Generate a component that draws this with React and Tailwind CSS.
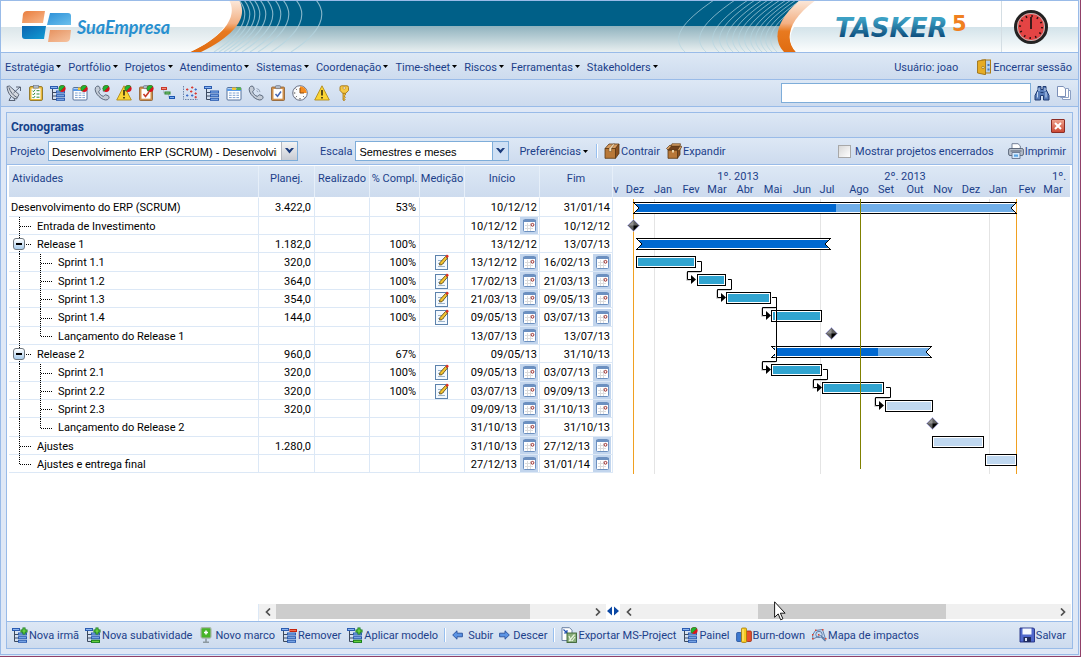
import React from "react";

const rows = [
  { id: "p", name: "Desenvolvimento do ERP (SCRUM)", level: 0, plan: "3.422,0", done: "53%", start: "10/12/12", end: "31/01/14" },
  { id: "inv", name: "Entrada de Investimento", level: 1, start: "10/12/12", pickStart: true, end: "10/12/12" },
  { id: "r1", name: "Release 1", level: 1, open: true, plan: "1.182,0", done: "100%", start: "13/12/12", end: "13/07/13" },
  { id: "s11", name: "Sprint 1.1", level: 2, plan: "320,0", done: "100%", note: true, start: "13/12/12", pickStart: true, end: "16/02/13", pickEnd: true },
  { id: "s12", name: "Sprint 1.2", level: 2, plan: "364,0", done: "100%", note: true, start: "17/02/13", pickStart: true, end: "21/03/13", pickEnd: true },
  { id: "s13", name: "Sprint 1.3", level: 2, plan: "354,0", done: "100%", note: true, start: "21/03/13", pickStart: true, end: "09/05/13", pickEnd: true },
  { id: "s14", name: "Sprint 1.4", level: 2, plan: "144,0", done: "100%", note: true, start: "09/05/13", pickStart: true, end: "03/07/13", pickEnd: true },
  { id: "l1", name: "Lançamento do Release 1", level: 2, last: true, start: "13/07/13", pickStart: true, end: "13/07/13" },
  { id: "r2", name: "Release 2", level: 1, open: true, plan: "960,0", done: "67%", start: "09/05/13", end: "31/10/13" },
  { id: "s21", name: "Sprint 2.1", level: 2, plan: "320,0", done: "100%", note: true, start: "09/05/13", pickStart: true, end: "03/07/13", pickEnd: true },
  { id: "s22", name: "Sprint 2.2", level: 2, plan: "320,0", done: "100%", note: true, start: "03/07/13", pickStart: true, end: "09/09/13", pickEnd: true },
  { id: "s23", name: "Sprint 2.3", level: 2, plan: "320,0", start: "09/09/13", pickStart: true, end: "31/10/13", pickEnd: true },
  { id: "l2", name: "Lançamento do Release 2", level: 2, last: true, start: "31/10/13", pickStart: true, end: "31/10/13" },
  { id: "aj", name: "Ajustes", level: 1, plan: "1.280,0", start: "31/10/13", pickStart: true, end: "27/12/13", pickEnd: true },
  { id: "fim", name: "Ajustes e entrega final", level: 1, last: true, start: "27/12/13", pickStart: true, end: "31/01/14", pickEnd: true },
];

function Icon({ children, className = "" }) {
  return (
    <svg viewBox="0 0 16 16" className={`h-4 w-4 shrink-0 ${className}`} aria-hidden="true">
      {children}
    </svg>
  );
}

const Orb = () => (
  <>
    <circle cx="12.2" cy="3.6" r="3.4" fill="#d8141c" />
    <path d="M8.8 3.6a3.4 3.4 0 0 1 6-2.2L10 6.200A3.400 3.400 0 0 1 8.800 3.600Z" fill="#22b431" stroke="#0c7a18" strokeWidth=".4" />
  </>
);

const TreeShape = () => (
  <>
    <path d="M2.500 3v11.500H6M2.500 7.500H6M2.500 11H6" fill="none" stroke="#3c4a60" />
    <rect x=".5" y="1.500" width="7" height="2" fill="#8ab4f0" stroke="#2b5cb0" />
    <rect x="6.500" y="6" width="8" height="2" fill="#8ab4f0" stroke="#2b5cb0" />
    <rect x="6.500" y="9.700" width="8" height="2" fill="#8ab4f0" stroke="#2b5cb0" />
    <rect x="6.500" y="13.300" width="8" height="2" fill="#8ab4f0" stroke="#2b5cb0" />
  </>
);

const WindowShape = () => (
  <>
    <rect x="1" y="2.500" width="14" height="12.500" rx="1" fill="#fff" stroke="#56729c" />
    <path d="M1 3.500h14v2.500H1z" fill="#5c9be6" />
    <path d="M6 2.500h4v2.500H6z" fill="#f3c534" />
    <path d="M10.500 2.500H15v2.500h-4.500z" fill="#57b847" />
    <path d="M3 8h10M3 10.300h10M3 12.600h10" stroke="#7da0d0" strokeDasharray="2.700 1" />
  </>
);

const PhoneShape = () => (
  <>
    <path d="M1.500 2.500C3 .5 5 .8 5.600 2.200l.6 2.300c0 1-1.700 1.300-1.500 2.400.5 1.900 2.500 3.800 4.400 4.400 1 .2 1.500-1.500 2.500-1.500l2.400.8c1.500.8 1.500 2.500-.3 4C9 17-.8 8 1.500 2.500Z" fill="#c3cbd6" stroke="#4f5c70" strokeWidth=".9" />
    <path d="M8.500 3.500a4 4 0 0 1 3.500 3.600M8.500 5.700a2 2 0 0 1 1.500 1.500" fill="none" stroke="#8492a8" strokeWidth=".8" />
  </>
);

const WarnShape = () => (
  <>
    <path d="M8 .8 15.300 15H.7Z" fill="#fbd534" stroke="#b08a1c" strokeWidth=".9" strokeLinejoin="round" />
    <path d="M8 5v5.500M8 12v1.600" stroke="#3c3414" strokeWidth="1.700" />
  </>
);

const ClipShape = () => (
  <>
    <rect x="1.500" y="2" width="13" height="13.500" rx="1" fill="#d0924e" stroke="#8c5c2c" strokeWidth=".8" />
    <rect x="3.500" y="4" width="9" height="9.700" fill="#fff" />
    <rect x="5.500" y=".6" width="5" height="3" rx="1" fill="#b4bcc8" stroke="#687488" strokeWidth=".7" />
  </>
);

const Satellite = () => (
  <Icon>
    <path d="M1 1.500 3.500 1l9.500 8.500-2.500 4.500C5 13 1.500 8 1 1.500Z" fill="#d3d8e0" stroke="#5c6678" />
    <path d="M3 2.500c1 4 4 8 8 10M7.500 8 14 2M10 2h4.500v4M5 11.500 3 15.500h6L8 13" fill="none" stroke="#4c5668" strokeWidth=".9" />
  </Icon>
);
const Checklist = () => (
  <Icon>
    <rect x="1.500" y="1.500" width="13" height="14" rx="1.500" fill="#e8b93a" stroke="#8f7424" strokeWidth=".9" />
    <rect x="3.500" y="3.500" width="9" height="10.500" fill="#fff" />
    <rect x="5.500" y=".5" width="5" height="2.600" fill="#b4bcc8" stroke="#687488" strokeWidth=".6" />
    <path d="m4.500 5.700 1 1 1.500-2M4.500 8.900l1 1 1.500-2M4.500 12.100l1 1 1.500-2M8.500 5.700h3M8.500 9h3M8.500 12.200h3" fill="none" stroke="#2c8a34" />
  </Icon>
);
const TreeOrb = () => <Icon><TreeShape /><Orb /></Icon>;
const Tree = () => <Icon><TreeShape /></Icon>;
const WindowOrb = () => <Icon><WindowShape /><Orb /></Icon>;
const Window = () => <Icon><WindowShape /></Icon>;
const PhoneOrb = () => <Icon><PhoneShape /><Orb /></Icon>;
const Phone = () => <Icon><PhoneShape /></Icon>;
const WarnOrb = () => <Icon><WarnShape /><Orb /></Icon>;
const Warn = () => <Icon><WarnShape /></Icon>;
const ClipOrb = () => (
  <Icon><ClipShape /><path d="m5.500 9 2 2.500L11 7" fill="none" stroke="#c83c28" strokeWidth="1.600" /><Orb /></Icon>
);
const Clip = () => (
  <Icon><ClipShape /><path d="m5.500 9 2 2.300L11 6.500" fill="none" stroke="#4466b4" strokeWidth="1.500" /></Icon>
);
const Bars = () => (
  <Icon>
    <path d="M3.500 4v4h3M8.500 8v4h3" fill="none" stroke="#a8b4c4" strokeWidth=".7" />
    <rect x="1.500" y="2.500" width="5" height="2" fill="#f08c78" stroke="#c8382c" />
    <rect x="5" y="7" width="5" height="2" fill="#86c878" stroke="#2c8434" />
    <rect x="9.500" y="11.500" width="5" height="2" fill="#7cb0f0" stroke="#1c54b0" />
  </Icon>
);
const Scatter = () => (
  <Icon>
    <path d="M1.500 1v13.500H16" fill="none" stroke="#6c84a8" strokeDasharray="1.500 1" />
    <path d="M4 4.500h2.400M5.200 3.300v2.400M9 2.500h2.400M10.200 1.300v2.400M8 6.500h2.400M9.200 5.300v2.400" stroke="#d83c34" />
    <path d="M12.500 4.500h2.400M13.700 3.300v2.400M4 10.500h2.400M5.200 9.300v2.400M9 10.500h2.400M10.200 9.300v2.400" stroke="#3c6cc8" />
    <path d="M12.500 8.500h2.400M13.700 7.300v2.400M12.500 12.200h2.400M13.700 11v2.400" stroke="#d83c34" />
  </Icon>
);
const Pie = () => (
  <Icon>
    <circle cx="8" cy="8" r="7.300" fill="#fcfcfc" stroke="#6c7488" />
    <path d="M8 8V1.200A6.800 6.800 0 0 1 14.800 8Z" fill="#f68c1e" />
    <path d="M8 3v5h4" fill="none" stroke="#8a4c14" />
    <path d="M8 13v1.500M1.800 8h1.500M3.700 3.700l1 1M3.700 12.300l1-1M12.300 12.300l-1-1" stroke="#444" />
  </Icon>
);
const Key = () => (
  <Icon>
    <path d="M7 7v8l1.200.7 1-1-1-1.200 1.200-1.200L8.200 11l1.200-1V7Z" fill="#f0bc34" stroke="#a47414" strokeWidth=".8" />
    <path d="M5.500.8h5.500q1.500 0 1.500 1.700v3L9.800 8.300H6.700L4 5.500v-3Q4 .8 5.500.8Z" fill="#f6c844" stroke="#a47414" strokeWidth=".9" />
    <circle cx="8.200" cy="3" r="1.200" fill="#fff" stroke="#a47414" strokeWidth=".6" />
  </Icon>
);
const Binoculars = () => (
  <Icon>
    <path d="M4 1.500h3v3h2v-3h3v3l3 6V15h-5.500v-4.500h-3V15H1v-4.500l3-6Z" fill="#587cb8" stroke="#203c74" />
    <path d="M3.500 7v5.500M5 3v3M12 7v5.500M11 3v3" stroke="#c4d8f4" />
    <path d="M6.500 7.500h3" stroke="#203c74" />
  </Icon>
);
const Pages = () => (
  <Icon>
    <path d="M6.500 5.500h8v9h-8Z" fill="#fff" stroke="#8ca0c4" />
    <path d="M4.500 3.500h8v9h-8Z" fill="#fff" stroke="#8ca0c4" />
    <path d="M1.500 1.500h5.700l2.300 2.300v7.700h-8Z" fill="#fff" stroke="#7c90b8" />
  </Icon>
);
const Door = () => (
  <Icon>
    <rect x="6" y="1" width="8.500" height="13" fill="#b4d0ec" stroke="#b07c14" />
    <path d="M11.500 5h2v2h-2zM11.500 9.500h2v2h-2z" fill="#4478c0" />
    <path d="M1.500 2 9.500.7v15L1.500 14Z" fill="#e6ac24" stroke="#94680c" strokeWidth=".8" />
    <circle cx="7" cy="8.500" r="1.200" fill="#f8e8a8" stroke="#6c4c08" strokeWidth=".5" />
  </Icon>
);
const BoxClosed = () => (
  <Icon>
    <path d="M1 5.500 5 1h10l-3.500 4.500Z" fill="#d89c60" stroke="#5c3814" strokeWidth=".8" />
    <path d="M1 5.500h10.500v9.800H1Z" fill="#b87838" stroke="#5c3814" strokeWidth=".8" />
    <path d="m11.500 5.500 3.500-4.500v9.500l-3.500 4.800Z" fill="#8a5020" stroke="#5c3814" strokeWidth=".8" />
    <path d="m5 5.500 4-4.500h2L7.500 5.500v3H5Z" fill="#f0dcb8" stroke="#5c3814" strokeWidth=".4" />
  </Icon>
);
const BoxOpen = () => (
  <Icon>
    <path d="M2 7h9.500v8.300H2Z" fill="#b87838" stroke="#5c3814" strokeWidth=".8" />
    <path d="m11.500 7 2.500-3v7.500l-2.500 3.800Z" fill="#8a5020" stroke="#5c3814" strokeWidth=".8" />
    <path d="M2 7 4.500 3H14l-2.500 4Z" fill="#70401c" stroke="#5c3814" strokeWidth=".8" />
    <path d="m2 7-1.500-1.500L4 2l1.500 1ZM11.500 7l1.500 1 3-4.500L14 3ZM5 3l1-2.200h8.500L14 3Z" fill="#dca468" stroke="#5c3814" strokeWidth=".7" />
    <path d="M6 7h2v2.500H6Z" fill="#ecd4a8" />
  </Icon>
);
const Printer = () => (
  <Icon>
    <path d="M4 .7h6l2.300 2.200V7H4Z" fill="#fff" stroke="#68748c" strokeWidth=".9" />
    <rect x=".6" y="5.500" width="14.800" height="7" rx="1.500" fill="#b8c0cc" stroke="#505c70" strokeWidth=".9" />
    <path d="M2.500 8h11" stroke="#505c70" />
    <path d="M4 9.500h8v6H4Z" fill="#d4e8fc" stroke="#68748c" strokeWidth=".9" />
    <path d="M6 11.500h4v2.200H6Z" fill="#58a4e4" />
  </Icon>
);
const TreeEdit = ({ plus, minus, bar }) => (
  <Icon>
    <TreeShape />
    {bar && <rect x="6.500" y="13.300" width="8" height="2" fill="#78e048" stroke="#188414" />}
    {plus && <path d="M12 .5v7M8.500 4h7" stroke="#0c7414" strokeWidth="3" />}
    {plus && <path d="M12 1.200v5.600M9.200 4h5.600" stroke="#7ce44c" strokeWidth="1.200" />}
    {minus && <rect x="9" y="2.500" width="6.500" height="2" fill="#f46c4c" stroke="#c4240c" />}
  </Icon>
);
const Flag = () => (
  <Icon>
    <path d="M8 10v5M5 15.400h6" stroke="#8c98a0" strokeWidth="1.600" />
    <rect x="3" y=".6" width="10" height="10.500" rx="1.500" fill="#48b428" stroke="#a8b4a8" strokeWidth="1.200" />
    <path d="M8 3.500v4M6 5.500h4" stroke="#fff" strokeWidth="1.600" />
  </Icon>
);
const Arrow = ({ right }) => (
  <svg viewBox="0 0 11 10" className={`h-[10px] w-[11px] shrink-0 ${right ? "rotate-180" : ""}`} aria-hidden="true">
    <path d="M.7 5 5 .8v2.400h5.400v3.600H5v2.400Z" fill="#5c94e4" stroke="#28509c" strokeWidth=".9" strokeLinejoin="round" />
  </svg>
);
const Export = () => (
  <Icon>
    <path d="M1 .7h7.500L11 3.200v10.300H1Z" fill="#fff" stroke="#5c7498" strokeWidth=".9" />
    <path d="M2.500 2.500 6 6M6 3v3H3" fill="none" stroke="#1c4cb0" strokeWidth="1.100" />
    <rect x="6" y="6" width="9.500" height="9.500" fill="#88ac78" stroke="#3c6434" strokeWidth=".9" />
    <path d="M8 14 13.500 7.500M8 9l2 5M11 14l3-4" stroke="#e8f4e0" strokeWidth="1.200" />
  </Icon>
);
const Burn = () => (
  <Icon>
    <rect x=".6" y="5.500" width="5" height="9" rx="1" fill="#3c78d0" stroke="#204c98" strokeWidth=".8" />
    <rect x="10.400" y="4" width="5" height="10.500" rx="1" fill="#e8502c" stroke="#98280c" strokeWidth=".8" />
    <rect x="5.500" y="1" width="5" height="14.500" rx="1" fill="#f8c820" stroke="#a47c08" strokeWidth=".8" />
    <path d="M7 2v12" stroke="#fcec90" />
  </Icon>
);
const Impact = () => (
  <Icon>
    <path d="m4.500 3.500 7-1 3 9.500-5-3.500L2 12l-.5-4Z" fill="#c8daf0" stroke="#5878a4" strokeWidth=".9" />
    <circle cx="8" cy="7.500" r="3.200" fill="none" stroke="#5878a4" strokeWidth=".9" />
    <path d="m10.500 10 4 4" stroke="#5878a4" strokeWidth="1.400" />
    <path d="M4 2.500h1.500V4H4zM11 2h1.500v1.500H11zM1 11h1.500v1.500H1zM14 11h1.500v1.500H14zM7 7h1.500v1.500H7zM1 7h1.500v1.500H1z" fill="#e0442c" />
  </Icon>
);
const Save = () => (
  <Icon>
    <path d="M1 1h13.500l1 1v13H1Z" fill="#5068cc" stroke="#202c80" strokeWidth=".9" />
    <path d="M3.500 1.500h9v6h-9Z" fill="#f4f8ff" />
    <path d="M4.500 10h7.500v5H4.500Z" fill="#202c60" />
    <path d="M6 11h2v3H6Z" fill="#e0e8fc" />
  </Icon>
);
const NoteIcon = () => (
  <svg viewBox="0 0 14 16" className="h-4 w-[14px]" aria-hidden="true">
    <rect x=".5" y="1.500" width="12" height="14" fill="#f4f9fe" stroke="#5c82ac" />
    <path d="M3 6.500h5M3 9.500h6M3 12.500h7" stroke="#9cb4cc" />
    <path d="M5 8.500 10.500 2.500l2 1.600-5.500 6.600L4.500 11Z" fill="#f4c430" stroke="#54400c" strokeWidth=".8" />
    <path d="m10.500 2.500 1.400-2 2 1.500L12.500 4.100Z" fill="#e43020" />
  </svg>
);
const CalendarIcon = () => (
  <svg viewBox="0 0 13 13" className="h-[13px] w-[13px]" aria-hidden="true">
    <rect x=".5" y=".5" width="12" height="12" rx="1" fill="#fff" stroke="#6c90c0" />
    <path d="M0 1h13v2H0z" fill="#6c90c0" />
    <path d="M2 6.500h8M2 9.500h8M4.500 4v8M7.500 4v8" stroke="#dcdcdc" />
    <circle cx="9.500" cy="5.800" r="1.400" fill="#fff" stroke="#901818" strokeWidth=".9" />
  </svg>
);
const Caret = () => (
  <svg viewBox="0 0 5 3" className="h-[3px] w-[5px] shrink-0" aria-hidden="true"><path d="M0 0h5L2.500 3Z" fill="#000" /></svg>
);
const Chevron = () => (
  <svg viewBox="0 0 9 6" className="h-[6px] w-[9px]" aria-hidden="true"><path d="M0 0h2.500l2 2 2-2H9L4.500 5.500Z" fill="#1c3c7c" /></svg>
);
const Divider = () => <span className="h-[14px] w-[2px] border-l border-[#98c0f0] bg-white" />;

const ARC_LEFT = [246, 251, 256, 261, 267, 274, 282, 290, 303, 323];
const ARC_RIGHT = [678, 699, 712, 719, 726, 732, 738, 744, 750, 755, 760, 765, 770];

function Banner() {
  return (
    <header className="flex h-[51px] shrink-0 overflow-hidden bg-white">
      <svg viewBox="1 1 340 51" className="h-[51px] w-[340px] shrink-0" role="img" aria-label="SuaEmpresa">
        <defs>
          <linearGradient id="low" x1="0" y1="0" x2="0" y2="1"><stop offset="0" stopColor="#8fb2be" /><stop offset="1" stopColor="#e8eff0" /></linearGradient>
          <linearGradient id="pale" x1="0" y1="0" x2="0" y2="1"><stop offset="0" stopColor="#dbe6ea" /><stop offset="1" stopColor="#fafcfc" /></linearGradient>
          <linearGradient id="swoosh" x1="0" y1="0" x2="0" y2="1"><stop offset="0" stopColor="#fbe9dc" /><stop offset=".45" stopColor="#f3b083" /><stop offset=".6" stopColor="#e87a20" /><stop offset="1" stopColor="#e06c10" /></linearGradient>
          <linearGradient id="lo" x1="0" y1="0" x2="1" y2="1"><stop offset="0" stopColor="#e87c3c" /><stop offset="1" stopColor="#f8b88c" /></linearGradient>
          <linearGradient id="lb" x1="0" y1="0" x2="1" y2="1"><stop offset="0" stopColor="#2c90d8" /><stop offset="1" stopColor="#6cc0ec" /></linearGradient>
          <linearGradient id="ld" x1="0" y1="0" x2="1" y2="1"><stop offset="0" stopColor="#0c64b0" /><stop offset="1" stopColor="#109cd4" /></linearGradient>
        </defs>
        <rect x="1" y="1" width="340" height="26" fill="#006088" />
        <rect x="1" y="26" width="340" height="26" fill="url(#low)" />
        {ARC_LEFT.map((x) => (
          <path key={x} d={`M${x - 7} 0C${x + 5} 14 ${x - 1} 32 ${x - 32} 52`} fill="none" stroke="#b4d4e0" strokeOpacity=".75" strokeWidth="1.100" />
        ))}
        <path d="M0 0H239C247 14 241 32 201 52H0Z" fill="url(#swoosh)" />
        <path d="M0 0H229C236 12 232 32 190 52H0Z" fill="#fff" />
        <path d="M0 27H224C217 37 205 45 190 52H0Z" fill="url(#pale)" />
        <path d="M23 14q1-3 4-3h18l-2 12H22Z" fill="url(#lo)" />
        <path d="M50 13h18q3 0 3 3v9H47Z" fill="url(#lb)" />
        <path d="M22 26h24l-2 13H25q-3 0-3-3Z" fill="url(#ld)" />
        <path d="M50 30h21l-1 9q-1 3-4 3H48Z" fill="url(#lo)" opacity=".8" />
        <text x="77" y="34" fontFamily="Lato,'Liberation Sans',sans-serif" fontSize="18" fontStyle="italic" fontWeight="700" fill="#2890d0">SuaEmpresa</text>
      </svg>
      <div className="h-[51px] flex-1 bg-[linear-gradient(#006088_0,#006088_25px,#8fb2be_25px,#e8eff0_51px)]" />
      <svg viewBox="660 1 418 51" className="h-[51px] w-[418px] shrink-0" role="img" aria-label="TASKER 5">
        <defs>
          <linearGradient id="brand" x1="0" y1="0" x2="0" y2="1"><stop offset=".2" stopColor="#3ca0c4" /><stop offset=".85" stopColor="#0a4878" /></linearGradient>
          <linearGradient id="white" x1="0" y1="0" x2="0" y2="1"><stop offset="0" stopColor="#d3e3ea" /><stop offset="1" stopColor="#fbfdfd" /></linearGradient>
        </defs>
        <rect x="660" y="1" width="418" height="26" fill="#006088" />
        <rect x="660" y="26" width="418" height="26" fill="url(#low)" />
        {ARC_RIGHT.map((x) => (
          <path key={x} d={`M${x + 36} 0C${x + 4} 22 ${x - 8} 38 ${x + 7} 52`} fill="none" stroke="#b4d4e0" strokeOpacity=".7" strokeWidth="1" />
        ))}
        <path d="M800 0C776 20 772 40 784 52H1078V0Z" fill="url(#swoosh)" />
        <path d="M816 0C788 20 784 40 796 52H1078V0Z" fill="#fff" />
        <path d="M794 27C788 37 790 45 796 52H1078V27Z" fill="url(#white)" />
        <path d="M1001.500 1v51" stroke="#d4dee4" />
        <text x="835" y="37" fontFamily="'DejaVu Sans','Liberation Sans',sans-serif" fontSize="26" fontStyle="italic" fontWeight="700" fill="url(#brand)">TASKER</text>
        <text x="952" y="31" fontFamily="'DejaVu Sans','Liberation Sans',sans-serif" fontSize="21" fontWeight="700" fill="#f08020">5</text>
        <circle cx="1031" cy="27" r="15.500" fill="#e44444" stroke="#222" strokeWidth="3" />
        <circle cx="1031" cy="27" r="13.600" fill="none" stroke="#b8b8b8" strokeWidth="1" />
        <circle cx="1031" cy="27" r="11" fill="none" stroke="#301010" strokeWidth="2" strokeDasharray="1.500 4.260" />
        <path d="M1031 17v12" stroke="#111" strokeWidth="1.600" />
      </svg>
    </header>
  );
}

const menus = ["Estratégia", "Portfólio", "Projetos", "Atendimento", "Sistemas", "Coordenação", "Time-sheet", "Riscos", "Ferramentas", "Stakeholders"];
const tools = [
  ["Radar", Satellite], ["Lista", Checklist], ["Nova EAP", TreeOrb], ["Nova janela", WindowOrb], ["Novo atendimento", PhoneOrb],
  ["Novo risco", WarnOrb], ["Nova tarefa", ClipOrb], ["Cronograma", Bars], ["Dispersão", Scatter], ["EAP", Tree], ["Janela", Window],
  ["Atendimento", Phone], ["Tarefa", Clip], ["Horas", Pie], ["Riscos", Warn], ["Senha", Key],
];

const barBg = "bg-linear-to-b from-[#dde8f5] to-[#cddbee]";

function ToolButton({ icon, children, className = "gap-px" }) {
  return (
    <button type="button" className={`flex items-center whitespace-nowrap ${className}`}>
      {icon}
      <span className="pt-[2px]">{children}</span>
    </button>
  );
}

function MenuButton({ children }) {
  return (
    <button type="button" className="flex items-center gap-[2px] whitespace-nowrap">
      <span className="pt-[2px]">{children}</span>
      <Caret />
    </button>
  );
}

function Combo({ id, label, value, className, boxClass }) {
  return (
    <div className="flex items-center gap-[3px]">
      <label htmlFor={id} className="pt-[2px]">{label}</label>
      <div className={`relative h-5 ${className}`}>
        <select id={id} className="h-full w-full appearance-none overflow-hidden border border-[#7eadd9] bg-white pt-[2px] pr-5 pl-[3px] font-['Liberation_Sans',sans-serif] text-[11px] text-black">
          <option>{value}</option>
        </select>
        <span className={`pointer-events-none absolute top-px right-px flex h-[18px] w-4 items-center justify-center border-l ${boxClass}`}><Chevron /></span>
      </div>
    </div>
  );
}

function Guides({ row }) {
  const stop = row.last ? 9 : 19;
  return (
    <svg className={`h-[17px] shrink-0 overflow-visible ${row.level === 2 ? "w-[49px]" : "w-7"}`} aria-hidden="true">
      <g stroke="#000" strokeDasharray="1 1">
        <path d={`M10.500 0V${row.level === 1 ? stop : 19}`} />
        {row.level === 1 && <path d="M11 9.500h11" />}
        {row.level === 2 && <path d={`M31.500 0V${stop}`} />}
        {row.level === 2 && <path d="M32 9.500h11" />}
      </g>
    </svg>
  );
}

function DateCell({ value, pick, label }) {
  return (
    <td className="border-r border-b border-[#dce8f6] p-0">
      <div className="flex h-[17px] items-center justify-end">
        <span className={`pt-[2px] ${pick ? "pr-[3px]" : "pr-[2px]"}`}>{value}</span>
        {pick && (
          <button type="button" aria-label={label} className="mr-px flex h-[17px] w-[18px] items-center justify-center bg-[#c2d5ed]">
            <CalendarIcon />
          </button>
        )}
      </div>
    </td>
  );
}

const cell = "border-r border-b border-[#dce8f6] p-0 pt-[2px] pr-[3px] text-right";

function ActivityTable() {
  const heads = ["Atividades", "Planej.", "Realizado", "% Compl.", "Medição", "Início", "Fim"];
  return (
    <table className="w-[604px] table-fixed border-separate border-spacing-0 self-start text-black">
      <colgroup>
        <col /><col className="w-[56px]" /><col className="w-[55px]" /><col className="w-[50px]" /><col className="w-[45px]" /><col className="w-[75px]" /><col className="w-[73px]" />
      </colgroup>
      <thead>
        <tr className={barBg}>
          {heads.map((h, i) => (
            <th key={h} className={`h-8 border-r border-b border-r-[#e6eff9] border-b-white px-0 pt-[6px] pb-0 align-top font-normal whitespace-nowrap text-[#1c3f8a] ${i === 0 ? "pl-[3px] text-left" : "text-center"}`}>{h}</th>
          ))}
        </tr>
      </thead>
      <tbody>
        {rows.map((r) => (
          <tr key={r.id} className="h-[18px] nth-[3n+1]:h-[19px]">
            <td className="border-r border-b border-[#dce8f6] p-0">
              <div className="relative flex h-[17px] items-center whitespace-nowrap">
                {r.level === 0 ? <span className="w-[2px]" /> : <Guides row={r} />}
                {r.open && (
                  <button type="button" aria-label={`Contrair ${r.name}`} className="absolute left-[4px] flex h-3 w-3 items-center justify-center rounded-[3px] border border-[#707880] bg-linear-to-b from-white to-[#a8ccec]">
                    <span className="h-[2px] w-[6px] bg-black" />
                  </button>
                )}
                <span className="pt-[2px]">{r.name}</span>
              </div>
            </td>
            <td className={cell}>{r.plan}</td>
            <td className={cell} />
            <td className={cell}>{r.done}</td>
            <td className="border-r border-b border-[#dce8f6] p-0">
              {r.note && <button type="button" aria-label={`Medição ${r.name}`} className="mx-auto flex h-[17px] items-center"><NoteIcon /></button>}
            </td>
            <DateCell value={r.start} pick={r.pickStart} label={`Início de ${r.name}`} />
            <DateCell value={r.end} pick={r.pickEnd} label={`Fim de ${r.name}`} />
          </tr>
        ))}
      </tbody>
    </table>
  );
}

const months = [
  ["v", 616], ["Dez", 635], ["Jan", 663], ["Fev", 691], ["Mar", 717], ["Abr", 745], ["Mai", 773], ["Jun", 802], ["Jul", 827], ["Ago", 859],
  ["Set", 886], ["Out", 915], ["Nov", 943], ["Dez", 971], ["Jan", 998], ["Fev", 1027], ["Mar", 1053],
];
const summaries = [[633, 1017, 202, 836], [636, 831, 238, 831], [771, 932, 346, 878]];
const bars = [
  [636, 696, 256, "#30a4d0"], [697, 726, 274, "#30a4d0"], [726, 771, 292, "#30a4d0"], [771, 822, 310, "#30a4d0"],
  [771, 822, 364, "#30a4d0"], [822, 884, 382, "#30a4d0"], [885, 933, 400, "#c0d8f0"], [932, 984, 436, "#c0d8f0"], [985, 1017, 454, "#c0d8f0"],
];
const milestones = [[633.5, 225.5], [831.5, 333.5], [932.5, 423.5]];
const links = [
  [697, 701.5, 261.5, 271.5, 687.5, 279.5], [728, 731.5, 279.5, 289.5, 717.5, 297.5], [772, 776.5, 297.5, 307.5, 762.5, 315.5],
  [772, 776.5, 297.5, 361.5, 762.5, 369.5], [823, 827.5, 369.5, 379.5, 813.5, 387.5], [886, 890.5, 387.5, 397.5, 875.5, 405.5],
];

function Gantt() {
  return (
    <div className="min-w-0 flex-1 overflow-hidden">
      <svg viewBox="613 166 457 308" className="h-[308px] w-[457px]" role="img" aria-label="Gráfico de Gantt">
        <defs>
          <linearGradient id="head" x1="0" y1="0" x2="0" y2="1"><stop offset="0" stopColor="#dde8f5" /><stop offset="1" stopColor="#cddbee" /></linearGradient>
        </defs>
        <rect x="613" y="166" width="457" height="31" fill="url(#head)" />
        <g fill="#1c3f8a" fontSize="11" textAnchor="middle">
          <text x="738" y="180">1º. 2013</text>
          <text x="905" y="180">2º. 2013</text>
          <text x="1052" y="180" textAnchor="start">1º.</text>
          {months.map(([m, x]) => <text key={x} x={x} y="193">{m}</text>)}
        </g>
        <path d="M654.500 199v275M820.500 199v275M989.500 199v275" stroke="#e4e4e4" />
        <path d="M633.500 199v275M1016.500 199v275" stroke="#f0a020" />
        {summaries.map(([a, b, y, p]) => (
          <g key={y}>
            <path d={`M${a} ${y}H${b}L${b - 6} ${y + 6}L${b} ${y + 12}H${a}L${a + 6} ${y + 6}Z`} fill="#fff" />
            <path d={`M${a + 2} ${y + 2}H${b - 2}L${b - 6} ${y + 6}L${b - 2} ${y + 10}H${a + 2}L${a + 6} ${y + 6}Z`} fill="#70aee8" />
            <path d={`M${a + 2} ${y + 2}H${p === b ? b - 2 : p}${p === b ? `L${b - 6} ${y + 6}L${b - 2} ${y + 10}` : `V${y + 10}`}H${a + 2}L${a + 6} ${y + 6}Z`} fill="#0068d0" />
            <path d={`M${a} ${y + 0.5}H${b}M${a} ${y + 11.5}H${b}M${a} ${y}l6 6l-6 6M${b} ${y}l-6 6l6 6`} fill="none" stroke="#000" />
          </g>
        ))}
        {bars.map(([a, b, y, fill]) => (
          <g key={`${a}-${y}`}>
            <rect x={a + 0.5} y={y + 0.5} width={b - a - 1} height="11" fill="#fff" stroke="#000" />
            <rect x={a + 2} y={y + 2} width={b - a - 4} height="8" fill={fill} />
          </g>
        ))}
        <path d="M775.500 311.500v9M775.500 346.500v11" stroke="#fff" />
        {links.map(([x0, x1, y0, y1, x2, y2]) => {
          const d = `M${x0} ${y0}H${x1}V${y1}H${x2}V${y2}h4`;
          return (
            <g key={`${x0}-${y1}`}>
              <path d={`M${x1} ${y1}H${x2}V${y2}h4`} transform="translate(-1 1)" fill="none" stroke="#d0d0d0" />
              <path d={d} fill="none" stroke="#000" />
              <path d={`M${x2 + 3.5} ${y2 - 4.5}l5 4.500l-5 4.500Z`} fill="#000" />
            </g>
          );
        })}
        {milestones.map(([x, y]) => (
          <g key={y}>
            <path d={`M${x} ${y - 6}l6 6l-6 6l-6 -6Z`} fill="#606060" stroke="#b8b8f0" strokeWidth=".8" />
            <path d={`M${x} ${y - 5}v5h-5Z`} fill="#909090" />
            <path d={`M${x} ${y}h5l-5 5Z`} fill="#000" />
          </g>
        ))}
        <path d="M860.500 199v270" stroke="#808000" />
      </svg>
    </div>
  );
}

function Scrollbar({ children, className = "" }) {
  return (
    <div className={`flex h-[15px] items-center bg-[#f0f0f0] ${className}`}>
      <button type="button" aria-label="Rolar para a esquerda" className="flex w-[17px] justify-center">
        <svg viewBox="0 0 6 8" className="h-2 w-[6px]"><path d="M5 .5 1.500 4 5 7.500" fill="none" stroke="#505050" strokeWidth="1.700" /></svg>
      </button>
      <div className="flex h-full flex-1">{children}</div>
      <button type="button" aria-label="Rolar para a direita" className="flex w-[17px] justify-center">
        <svg viewBox="0 0 6 8" className="h-2 w-[6px]"><path d="m1 .5 3.500 3.500L1 7.500" fill="none" stroke="#505050" strokeWidth="1.700" /></svg>
      </button>
    </div>
  );
}

export default function App() {
  return (
    <div className="flex h-screen flex-col border-r border-b border-[#904068] bg-[#dfe8f6] font-[Roboto,sans-serif] text-[11px] leading-[14px] text-[#1c3f8a]">
      <div className="mr-px mb-px flex min-h-0 flex-1 flex-col border border-[#99bbe8]">
        <Banner />
        <nav className={`flex h-7 shrink-0 items-center border-y border-[#99bbe8] pt-px pr-[6px] pl-1 ${barBg}`}>
          <div className="flex gap-[7px]">
            {menus.map((m) => <MenuButton key={m}>{m}</MenuButton>)}
          </div>
          <span className="mr-[18px] ml-auto pt-[2px]">Usuário: joao</span>
          <ToolButton icon={<Door />}>Encerrar sessão</ToolButton>
        </nav>
        <div className={`flex h-[27px] shrink-0 items-center border-b border-[#99bbe8] pr-[6px] pl-[5px] ${barBg}`}>
          <div className="flex gap-[6px]">
            {tools.map(([name, C]) => <button key={name} type="button" aria-label={name}><C /></button>)}
          </div>
          <input type="text" aria-label="Pesquisar" className="ml-auto h-5 w-[250px] border border-[#7eadd9] bg-white px-1 text-black" />
          <button type="button" aria-label="Buscar" className="ml-[3px]"><Binoculars /></button>
          <button type="button" aria-label="Páginas" className="ml-[6px]"><Pages /></button>
        </div>

        <main className="mx-[5px] my-[5px] flex min-h-0 flex-1 flex-col border border-[#99bbe8] bg-white">
          <div className={`flex h-[25px] shrink-0 items-center justify-between border-b border-[#99bbe8] pt-[2px] pr-[7px] pl-1 ${barBg}`}>
            <h1 className="pt-[2px] text-xs leading-[14px] font-bold text-[#15428b]">Cronogramas</h1>
            <button type="button" aria-label="Fechar" className="flex h-[14px] w-[14px] items-center justify-center rounded-[1px] border border-[#8c2c24] bg-linear-to-b from-[#eca08c] to-[#cc4834]">
              <svg viewBox="0 0 8 8" className="h-2 w-2"><path d="m1 1 6 6M7 1 1 7" stroke="#fff" strokeWidth="2" /></svg>
            </button>
          </div>
          <div className={`flex h-[27px] shrink-0 items-center border-b border-[#99bbe8] pr-[6px] pl-[3px] ${barBg}`}>
            <Combo id="projeto" label="Projeto" value="Desenvolvimento ERP (SCRUM) - Desenvolvimento do ERP" className="w-[250px]" boxClass="border-[#b4b8c0] bg-linear-to-b from-[#f4f4f4] to-[#c8ccd4]" />
            <span className="w-[22px]" />
            <Combo id="escala" label="Escala" value="Semestres e meses" className="w-[154px]" boxClass="border-[#7eadd9] bg-[#cfe0f4]" />
            <span className="w-[10px]" />
            <MenuButton>Preferências</MenuButton>
            <span className="w-2" />
            <Divider />
            <span className="w-[6px]" />
            <div className="flex gap-[6px]">
              <ToolButton icon={<BoxClosed />}>Contrair</ToolButton>
              <ToolButton icon={<BoxOpen />}>Expandir</ToolButton>
            </div>
            <label className="mr-[14px] ml-auto flex items-center gap-1">
              <input type="checkbox" className="h-[13px] w-[13px] appearance-none border border-[#a8a8a8] bg-linear-to-br from-[#d8d8d8] to-white" />
              <span className="pt-[2px]">Mostrar projetos encerrados</span>
            </label>
            <ToolButton icon={<Printer />}>Imprimir</ToolButton>
          </div>

          <div className="relative flex min-h-0 flex-1 flex-col pt-px pr-px pl-[2px]">
            <div className="flex min-h-0 flex-1 overflow-hidden">
              <ActivityTable />
              <Gantt />
            </div>
            <div className="flex h-[17px] items-start">
              <div className="h-full w-[250px] border-r border-[#dce8f6]" />
              <Scrollbar className="w-[347px]">
                <span className="h-full w-[254px] bg-[#cdcdcd]" />
              </Scrollbar>
              <svg viewBox="0 0 14 15" className="h-[15px] w-[14px]" aria-hidden="true"><path d="M6 2.500v9L1 7ZM8 2.500v9L13 7Z" fill="#0c48a4" /></svg>
              <Scrollbar className="flex-1">
                <span className="h-full w-[29%]" />
                <span className="h-full w-[45%] bg-[#cdcdcd]" />
              </Scrollbar>
            </div>
            <svg viewBox="0 0 12 20" className="pointer-events-none absolute bottom-0 left-[767px] h-5 w-3" aria-hidden="true">
              <path d="M.6.8v15.500l3.600-3.400 2.500 5.900 2.200-1-2.500-5.600h4.700Z" fill="#fff" stroke="#000" strokeWidth=".9" />
            </svg>
          </div>

          <footer className={`flex h-[27px] shrink-0 items-center gap-[6px] border-t border-[#99bbe8] pr-[6px] pl-[5px] ${barBg}`}>
            <ToolButton icon={<TreeEdit plus />}>Nova irmã</ToolButton>
            <ToolButton icon={<TreeEdit plus bar />}>Nova subatividade</ToolButton>
            <ToolButton icon={<Flag />}>Novo marco</ToolButton>
            <ToolButton icon={<TreeEdit minus />}>Remover</ToolButton>
            <ToolButton icon={<TreeEdit plus bar />}>Aplicar modelo</ToolButton>
            <Divider />
            <ToolButton icon={<Arrow />} className="gap-[5px]">Subir</ToolButton>
            <ToolButton icon={<Arrow right />} className="gap-[3px]">Descer</ToolButton>
            <Divider />
            <ToolButton icon={<Export />}>Exportar MS-Project</ToolButton>
            <ToolButton icon={<TreeOrb />}>Painel</ToolButton>
            <ToolButton icon={<Burn />}>Burn-down</ToolButton>
            <ToolButton icon={<Impact />}>Mapa de impactos</ToolButton>
            <ToolButton icon={<Save />} className="ml-auto gap-px">Salvar</ToolButton>
          </footer>
        </main>
      </div>
    </div>
  );
}
